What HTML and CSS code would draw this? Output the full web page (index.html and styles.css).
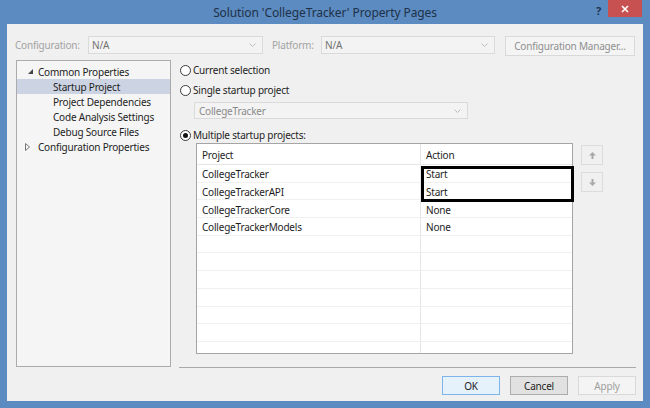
FILE: index.html
```html
<!DOCTYPE html>
<html>
<head>
<meta charset="utf-8">
<link rel="stylesheet" href="styles.css">
</head>
<body>
<div class="window">
  <div class="titlebar">
    <span class="title">Solution 'CollegeTracker' Property Pages</span>
    <span class="help">?</span>
    <span class="close"><svg width="8" height="8" viewBox="0 0 8 8"><path d="M1 1 L7 7 M7 1 L1 7" stroke="#fff" stroke-width="1.6"/></svg></span>
  </div>
  <div class="client">
    <div class="configrow">
      <span class="lbl">Configuration:</span>
      <div class="combo w175"><span>N/A</span><svg class="chev" width="7" height="4" viewBox="0 0 7 4"><path d="M0.5 0.5 L3.5 3.5 L6.5 0.5" fill="none" stroke="#bdbdbd"/></svg></div>
      <span class="lbl lbl2">Platform:</span>
      <div class="combo w174"><span>N/A</span><svg class="chev" width="7" height="4" viewBox="0 0 7 4"><path d="M0.5 0.5 L3.5 3.5 L6.5 0.5" fill="none" stroke="#bdbdbd"/></svg></div>
      <div class="cfgbtn">Configuration Manager...</div>
    </div>
    <div class="main">
      <div class="tree">
        <div class="node l0"><svg class="exp" width="5" height="5" viewBox="0 0 5 5"><polygon points="5,0 5,5 0,5" fill="#444"/></svg>Common Properties</div>
        <div class="node l1 sel">Startup Project</div>
        <div class="node l1">Project Dependencies</div>
        <div class="node l1">Code Analysis Settings</div>
        <div class="node l1">Debug Source Files</div>
        <div class="node l0"><svg class="col" width="5" height="8" viewBox="0 0 5 8"><polygon points="0.5,0.5 4.5,4 0.5,7.5" fill="none" stroke="#777"/></svg>Configuration Properties</div>
      </div>
      <div class="pane">
        <div class="radio-row r1"><span class="radio"></span>Current selection</div>
        <div class="radio-row r2"><span class="radio"></span>Single startup project</div>
        <div class="combo pcombo"><span>CollegeTracker</span><svg class="chev" width="7" height="4" viewBox="0 0 7 4"><path d="M0.5 0.5 L3.5 3.5 L6.5 0.5" fill="none" stroke="#bdbdbd"/></svg></div>
        <div class="radio-row r3"><span class="radio on"></span>Multiple startup projects:</div>
        <div class="tablearea">
          <div class="tablewrap">
            <div class="grid">
              <div class="row head"><div class="c1">Project</div><div class="c2">Action</div></div>
              <div class="row"><div class="c1">CollegeTracker</div><div class="c2">Start</div></div>
              <div class="row"><div class="c1">CollegeTrackerAPI</div><div class="c2">Start</div></div>
              <div class="row"><div class="c1">CollegeTrackerCore</div><div class="c2">None</div></div>
              <div class="row"><div class="c1">CollegeTrackerModels</div><div class="c2">None</div></div>
              <div class="row"><div class="c1"></div><div class="c2"></div></div>
              <div class="row"><div class="c1"></div><div class="c2"></div></div>
              <div class="row"><div class="c1"></div><div class="c2"></div></div>
              <div class="row"><div class="c1"></div><div class="c2"></div></div>
              <div class="row"><div class="c1"></div><div class="c2"></div></div>
              <div class="row"><div class="c1"></div><div class="c2"></div></div>
              <div class="row"><div class="c1"></div><div class="c2"></div></div>
            </div>
            <div class="highlight"></div>
          </div>
          <div class="arrows">
            <div class="abtn"><svg width="7" height="7" viewBox="0 0 7 7"><path d="M3.5 0 L7 3.5 H4.5 V7 H2.5 V3.5 H0 Z" fill="#a8a8a8"/></svg></div>
            <div class="abtn"><svg width="7" height="7" viewBox="0 0 7 7"><path d="M3.5 7 L7 3.5 H4.5 V0 H2.5 V3.5 H0 Z" fill="#a8a8a8"/></svg></div>
          </div>
        </div>
      </div>
    </div>
    <div class="buttons">
      <div class="btn ok">OK</div>
      <div class="btn cancel">Cancel</div>
      <div class="btn apply">Apply</div>
    </div>
  </div>
</div>
</body>
</html>
```
FILE: styles.css
```css
* { box-sizing: border-box; }
body { margin: 0; font-family: "Noto Sans", "Segoe UI", sans-serif; font-size: 10px; letter-spacing: -0.2px; color: #1e1e1e; }
.window { width: 650px; height: 408px; background: #5b8bc0; padding: 0 7px 7px; display: flex; flex-direction: column; }
.titlebar { height: 24px; flex: none; position: relative; display: flex; align-items: center; justify-content: center; }
.title { font-size: 12px; letter-spacing: -0.1px; color: #1f3148; padding-top: 1px; }
.help { position: absolute; left: 589px; top: 3px; font-weight: bold; font-size: 11px; color: #1b3556; }
.close { position: absolute; left: 601px; top: 0; width: 34px; height: 17px; background: #c75050; display: flex; align-items: center; justify-content: center; }
.client { flex: 1; background: #f0f0f0; display: flex; flex-direction: column; padding: 12px 7px 0 8px; }
.configrow { display: flex; align-items: flex-start; height: 20px; }
.lbl { width: 73px; line-height: 18px; color: #a3a3a3; }
.lbl2 { margin-left: 9px; width: 49px; }
.combo { height: 18px; border: 1px solid #dadada; background: #f3f3f3; display: flex; align-items: center; justify-content: space-between; padding: 0 6px 0 3px; color: #707070; }
.w175 { width: 175px; }
.w174 { width: 174px; }
.chev { flex: none; }
.cfgbtn { margin-left: 10px; width: 130px; height: 20px; border: 1px solid #d9d9d9; background: #f4f4f4; color: #8f8f8f; display: flex; align-items: center; justify-content: center; }
.main { display: flex; margin-top: 4px; }
.tree { margin-left: 1px; width: 155px; height: 307px; border: 1px solid #ababab; background: #f5f5f5; padding-top: 3px; }
.node { height: 15px; line-height: 15px; padding-top: 1px; display: flex; align-items: center; white-space: nowrap; }
.l0 { padding-left: 10px; }
.l1 { padding-left: 36px; }
.sel { background: #ccd3e3; }
.exp { margin-right: 5px; margin-left: 1px; margin-top: -2px; }
.col { margin-right: 8px; margin-left: -2px; }
.pane { margin-left: 8px; width: 457px; height: 308px; border-bottom: 1px solid #a9a9a9; }
.radio-row { display: flex; align-items: center; height: 16px; white-space: nowrap; }
.r1 { margin-top: 2px; }
.r2 { margin-top: 4px; }
.r3 { margin-top: 8px; }
.radio { width: 11px; height: 11px; border: 1px solid #3a3a3a; border-radius: 50%; background: #fff; margin: 0 2px 0 1px; display: flex; align-items: center; justify-content: center; }
.radio.on::after { content: ""; width: 5px; height: 5px; border-radius: 50%; background: #111; }
.pcombo { margin: 4px 0 0 15px; width: 274px; height: 17px; color: #8a8a8a; padding-left: 4px; }
.tablearea { display: flex; align-items: flex-start; }
.tablewrap { position: relative; margin-left: 17px; width: 377px; height: 211px; border: 1px solid #a5a5a5; background: #fff; }
.grid { height: 209px; overflow: hidden; }
.row { display: grid; grid-template-columns: 224px 1fr; height: 17.7px; border-bottom: 1px solid #f0f0f0; }
.row.head { height: 21px; border-bottom: 1px solid #e6e6e6; }
.c1, .c2 { padding: 2px 0 0 5px; display: flex; align-items: center; white-space: nowrap; }
.head .c1, .head .c2 { padding-top: 1px; }
.c1 { border-right: 1px solid #e6e6e6; }
.highlight { position: absolute; left: 224px; top: 22px; width: 153px; height: 36px; border: 3px solid #000; }
.arrows { margin: 2px 0 0 8px; display: flex; flex-direction: column; gap: 7px; }
.abtn { width: 22px; height: 20px; border: 1px solid #dcdcdc; background: #f0f0f0; display: flex; align-items: center; justify-content: center; }
.buttons { display: flex; justify-content: flex-end; gap: 10px; margin-top: 8px; }
.btn { width: 58px; height: 19px; display: flex; align-items: center; justify-content: center; }
.ok { background: #e5f1fb; border: 1px solid #7eb4ea; }
.cancel { background: #e1e1e1; border: 1px solid #adadad; }
.apply { background: #f4f4f4; border: 1px solid #d9d9d9; color: #a0a0a0; }
```
